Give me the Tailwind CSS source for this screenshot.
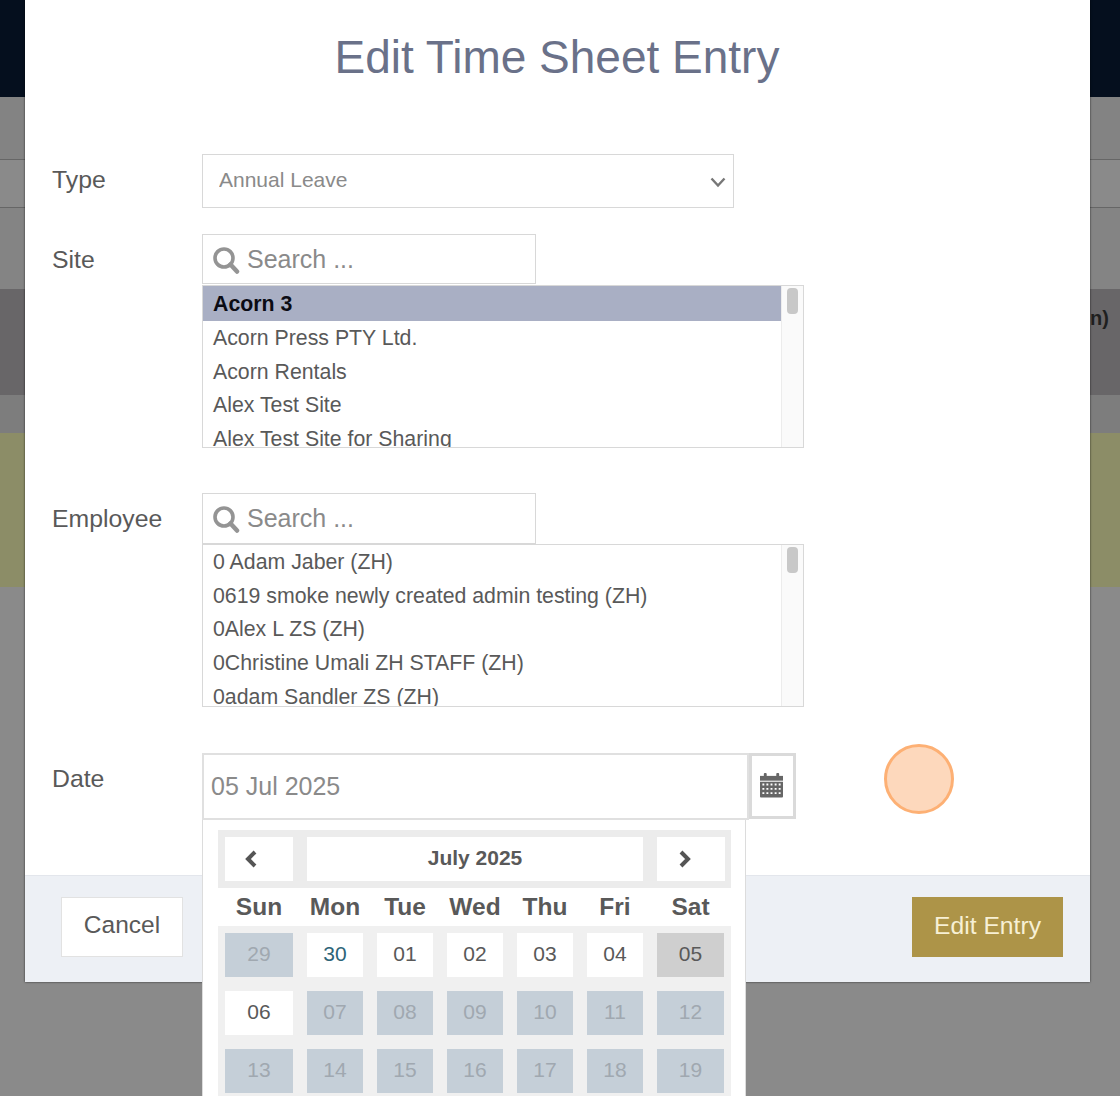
<!DOCTYPE html>
<html lang="en">
<head>
    <meta charset="UTF-8">
    <meta name="viewport" content="width=device-width, initial-scale=1.0">
    <title>Edit Time Sheet Entry</title>
    <script src="https://cdn.jsdelivr.net/npm/@tailwindcss/browser@4"></script>
</head>
<body class="relative h-[1096px] overflow-hidden bg-[#8a8a8a] font-['Liberation_Sans',Arial,sans-serif] text-[#595959]">

    <!-- page behind the overlay -->
    <div class="flex flex-col">
        <div class="h-[97px] bg-[#050f1e]"></div>
        <div class="h-[62px] bg-[#838383]"></div>
        <div class="h-[49px] border-y border-[#666] bg-[#8a8a8a]"></div>
        <div class="h-[81px] bg-[#848484]"></div>
        <div class="h-[106px] bg-[#686668] pl-[1090px] pt-[17px] text-[20px] leading-[24px] font-bold text-[#1f1f1f]">n)</div>
        <div class="h-[38px] bg-[#7d7d7d]"></div>
        <div class="h-[154px] bg-[#8c8d67]"></div>
    </div>

    <!-- modal -->
    <div class="absolute left-[25px] top-0 flex h-[982px] w-[1065px] flex-col bg-white shadow-[0_0_2px_rgba(0,0,0,0.7)]">
        <div class="flex-1 pl-[27px]">
            <h2 class="-ml-[28px] h-[154px] pt-[28px] text-center text-[46px] leading-[58px] text-[#6a7189]">Edit Time Sheet Entry</h2>

            <!-- Type -->
            <div class="flex">
                <label class="w-[150px] text-[24.800px] leading-[52px]">Type</label>
                <div class="relative h-[54px] w-[532px]">
                    <select class="h-full w-full appearance-none border border-[#d8d8d8] bg-white pb-[2px] pl-[16px] text-[21px] text-[#8a8a8a]">
                        <option>Annual Leave</option>
                    </select>
                    <svg class="absolute right-[8px] top-[22px] h-[12px] w-[16px]" viewBox="0 0 16 12" fill="none" stroke="#777" stroke-width="2.4"><path d="M1.5 2.5 8 9.5l6.500-7"/></svg>
                </div>
            </div>

            <!-- Site -->
            <div class="mt-[26px] flex">
                <label class="w-[150px] text-[24.800px] leading-[52px]">Site</label>
                <div>
                    <div class="relative h-[50px] w-[334px]">
                        <svg class="absolute left-[10px] top-[12px] h-[28px] w-[28px]" viewBox="0 0 28 28" fill="none" stroke="#949494"><circle cx="12" cy="12" r="9" stroke-width="3.600"/><path d="M18.500 18.500 25 25.500" stroke-width="4.500" stroke-linecap="round"/></svg>
                        <input type="text" placeholder="Search ..." class="h-full w-full border border-[#d8d8d8] pl-[44px] text-[25px] placeholder:text-[#8a8a8a]">
                    </div>
                    <div class="mt-px flex h-[163px] w-[602px] overflow-hidden border border-[#d8d8d8] text-[21.3px] leading-[33.700px]">
                        <ul class="flex-1">
                            <li class="h-[35px] bg-[#a9afc4] pl-[10px] font-bold leading-[36px] text-[#0b0b14]">Acorn 3</li>
                            <li class="mt-px h-[33.700px] pl-[10px]">Acorn Press PTY Ltd.</li>
                            <li class="h-[33.700px] pl-[10px]">Acorn Rentals</li>
                            <li class="h-[33.700px] pl-[10px]">Alex Test Site</li>
                            <li class="h-[33.700px] pl-[10px]">Alex Test Site for Sharing</li>
                        </ul>
                        <div class="w-[22px] border-l border-[#ececec] bg-[#fafafa] pl-[5px] pt-[2px]">
                            <div class="h-[26px] w-[11px] rounded-[4px] bg-[#c8c8c8]"></div>
                        </div>
                    </div>
                </div>
            </div>

            <!-- Employee -->
            <div class="mt-[45px] flex">
                <label class="w-[150px] text-[24.800px] leading-[52px]">Employee</label>
                <div>
                    <div class="relative h-[51px] w-[334px]">
                        <svg class="absolute left-[10px] top-[12px] h-[28px] w-[28px]" viewBox="0 0 28 28" fill="none" stroke="#949494"><circle cx="12" cy="12" r="9" stroke-width="3.600"/><path d="M18.500 18.500 25 25.500" stroke-width="4.500" stroke-linecap="round"/></svg>
                        <input type="text" placeholder="Search ..." class="h-full w-full border border-[#d8d8d8] pl-[44px] text-[25px] placeholder:text-[#8a8a8a]">
                    </div>
                    <div class="flex h-[163px] w-[602px] overflow-hidden border border-[#d8d8d8] text-[21.3px] leading-[33.700px]">
                        <ul class="flex-1 pt-px">
                            <li class="h-[33.700px] pl-[10px]">0 Adam Jaber (ZH)</li>
                            <li class="h-[33.700px] pl-[10px]">0619 smoke newly created admin testing (ZH)</li>
                            <li class="h-[33.700px] pl-[10px]">0Alex L ZS (ZH)</li>
                            <li class="h-[33.700px] pl-[10px]">0Christine Umali ZH STAFF (ZH)</li>
                            <li class="h-[33.700px] pl-[10px]">0adam Sandler ZS (ZH)</li>
                        </ul>
                        <div class="w-[22px] border-l border-[#ececec] bg-[#fafafa] pl-[5px] pt-[2px]">
                            <div class="h-[26px] w-[11px] rounded-[4px] bg-[#c8c8c8]"></div>
                        </div>
                    </div>
                </div>
            </div>

            <!-- Date -->
            <div class="mt-[46px] flex">
                <label class="w-[150px] text-[24.800px] leading-[51px]">Date</label>
                <div class="relative flex h-[67px] w-[594px]">
                    <input type="text" value="05 Jul 2025" readonly class="h-full w-[548px] border-2 border-[#e0e0e0] pb-px pl-[7px] text-[25px] text-[#8a8a8a]">
                    <div class="flex h-[66px] w-[47px] items-center justify-center border-[3px] border-[#dadada] bg-white pb-[3px] pr-[3px]">
                        <svg class="h-[26px] w-[23px]" viewBox="0 0 24 26" fill="#666"><rect x="4" y="0.500" width="3" height="5" rx="1"/><rect x="17" y="0.500" width="3" height="5" rx="1"/><path d="M0 3.500h24v5H0z"/><path fill-rule="evenodd" d="M0 9.500h24V25a1 1 0 0 1-1 1H1a1 1 0 0 1-1-1zM2.500 11.500v2h2v-2zm4.200 0v2h2v-2zm4.300 0v2h2v-2zm4.300 0v2h2v-2zm4.200 0v2h2v-2zM2.500 16v2h2v-2zm4.200 0v2h2v-2zm4.300 0v2h2v-2zm4.300 0v2h2v-2zm4.200 0v2h2v-2zM2.500 20.500v2h2v-2zm4.200 0v2h2v-2zm4.300 0v2h2v-2zm4.300 0v2h2v-2zm4.200 0v2h2v-2z"/></svg>
                    </div>

                    <!-- calendar popup -->
                    <div class="absolute left-0 top-[67px] z-10 w-[544px] border-x border-[#dcdcdc] bg-white pl-[15px] pt-[10px]">
                        <div class="w-[513px] text-[21px]">
                            <div class="grid h-[58px] grid-cols-[82px_343px_88px] bg-[#ececec] py-[7px]">
                                <div class="ml-[7px] flex w-[68px] items-center justify-center bg-white pr-[16px]">
                                    <svg class="h-[18px] w-[14px]" viewBox="0 0 14 18" fill="none" stroke="#555" stroke-width="4"><path d="M11 2 4 9l7 7"/></svg>
                                </div>
                                <div class="ml-[7px] w-[336px] bg-white text-center font-bold leading-[42px]">July 2025</div>
                                <div class="ml-[14px] flex w-[68px] items-center justify-center bg-white pr-[12px]">
                                    <svg class="h-[18px] w-[14px]" viewBox="0 0 14 18" fill="none" stroke="#555" stroke-width="4"><path d="m3 2 7 7-7 7"/></svg>
                                </div>
                            </div>
                            <div class="grid h-[38px] grid-cols-[82px_70px_70px_70px_70px_70px_81px] text-center text-[24.500px] leading-[38px] font-bold">
                                <div>Sun</div><div>Mon</div><div>Tue</div><div>Wed</div><div>Thu</div><div>Fri</div><div>Sat</div>
                            </div>
                            <div class="grid grid-cols-[82px_70px_70px_70px_70px_70px_81px] auto-rows-[58px] bg-[#f0f0f0] text-center leading-[42px]">
                                <div class="mx-[7px] my-[7px] bg-[#c5cfd8] text-[#a0a8b0]">29</div>
                                <div class="mx-[7px] my-[7px] bg-white text-[#2d6478]">30</div>
                                <div class="mx-[7px] my-[7px] bg-white">01</div>
                                <div class="mx-[7px] my-[7px] bg-white">02</div>
                                <div class="mx-[7px] my-[7px] bg-white">03</div>
                                <div class="mx-[7px] my-[7px] bg-white">04</div>
                                <div class="mx-[7px] my-[7px] bg-[#cfcfcf]">05</div>

                                <div class="mx-[7px] my-[7px] bg-white">06</div>
                                <div class="mx-[7px] my-[7px] bg-[#c5cfd8] text-[#a0a8b0]">07</div>
                                <div class="mx-[7px] my-[7px] bg-[#c5cfd8] text-[#a0a8b0]">08</div>
                                <div class="mx-[7px] my-[7px] bg-[#c5cfd8] text-[#a0a8b0]">09</div>
                                <div class="mx-[7px] my-[7px] bg-[#c5cfd8] text-[#a0a8b0]">10</div>
                                <div class="mx-[7px] my-[7px] bg-[#c5cfd8] text-[#a0a8b0]">11</div>
                                <div class="mx-[7px] my-[7px] bg-[#c5cfd8] text-[#a0a8b0]">12</div>

                                <div class="mx-[7px] my-[7px] bg-[#c5cfd8] text-[#a0a8b0]">13</div>
                                <div class="mx-[7px] my-[7px] bg-[#c5cfd8] text-[#a0a8b0]">14</div>
                                <div class="mx-[7px] my-[7px] bg-[#c5cfd8] text-[#a0a8b0]">15</div>
                                <div class="mx-[7px] my-[7px] bg-[#c5cfd8] text-[#a0a8b0]">16</div>
                                <div class="mx-[7px] my-[7px] bg-[#c5cfd8] text-[#a0a8b0]">17</div>
                                <div class="mx-[7px] my-[7px] bg-[#c5cfd8] text-[#a0a8b0]">18</div>
                                <div class="mx-[7px] my-[7px] bg-[#c5cfd8] text-[#a0a8b0]">19</div>
                            </div>
                        </div>
                    </div>
                </div>
            </div>
        </div>

        <!-- footer -->
        <div class="flex h-[107px] items-start justify-between border-t border-[#e3e6ec] bg-[#edf0f5] pl-[36px] pr-[27px] pt-[21px]">
            <button class="h-[60px] w-[122px] border border-[#e2e2e2] bg-white pb-[3px] text-[24.500px] text-[#595959]">Cancel</button>
            <button class="h-[60px] w-[151px] bg-[#ad9448] pb-[2px] text-[24.700px] text-[#f7f0d5]">Edit Entry</button>
        </div>
    </div>

    <!-- click marker -->
    <div class="absolute left-[884px] top-[744px] h-[70px] w-[70px] rounded-full border-[3px] border-[#fdb074] bg-[#fdd8bc]"></div>
</body>
</html>
